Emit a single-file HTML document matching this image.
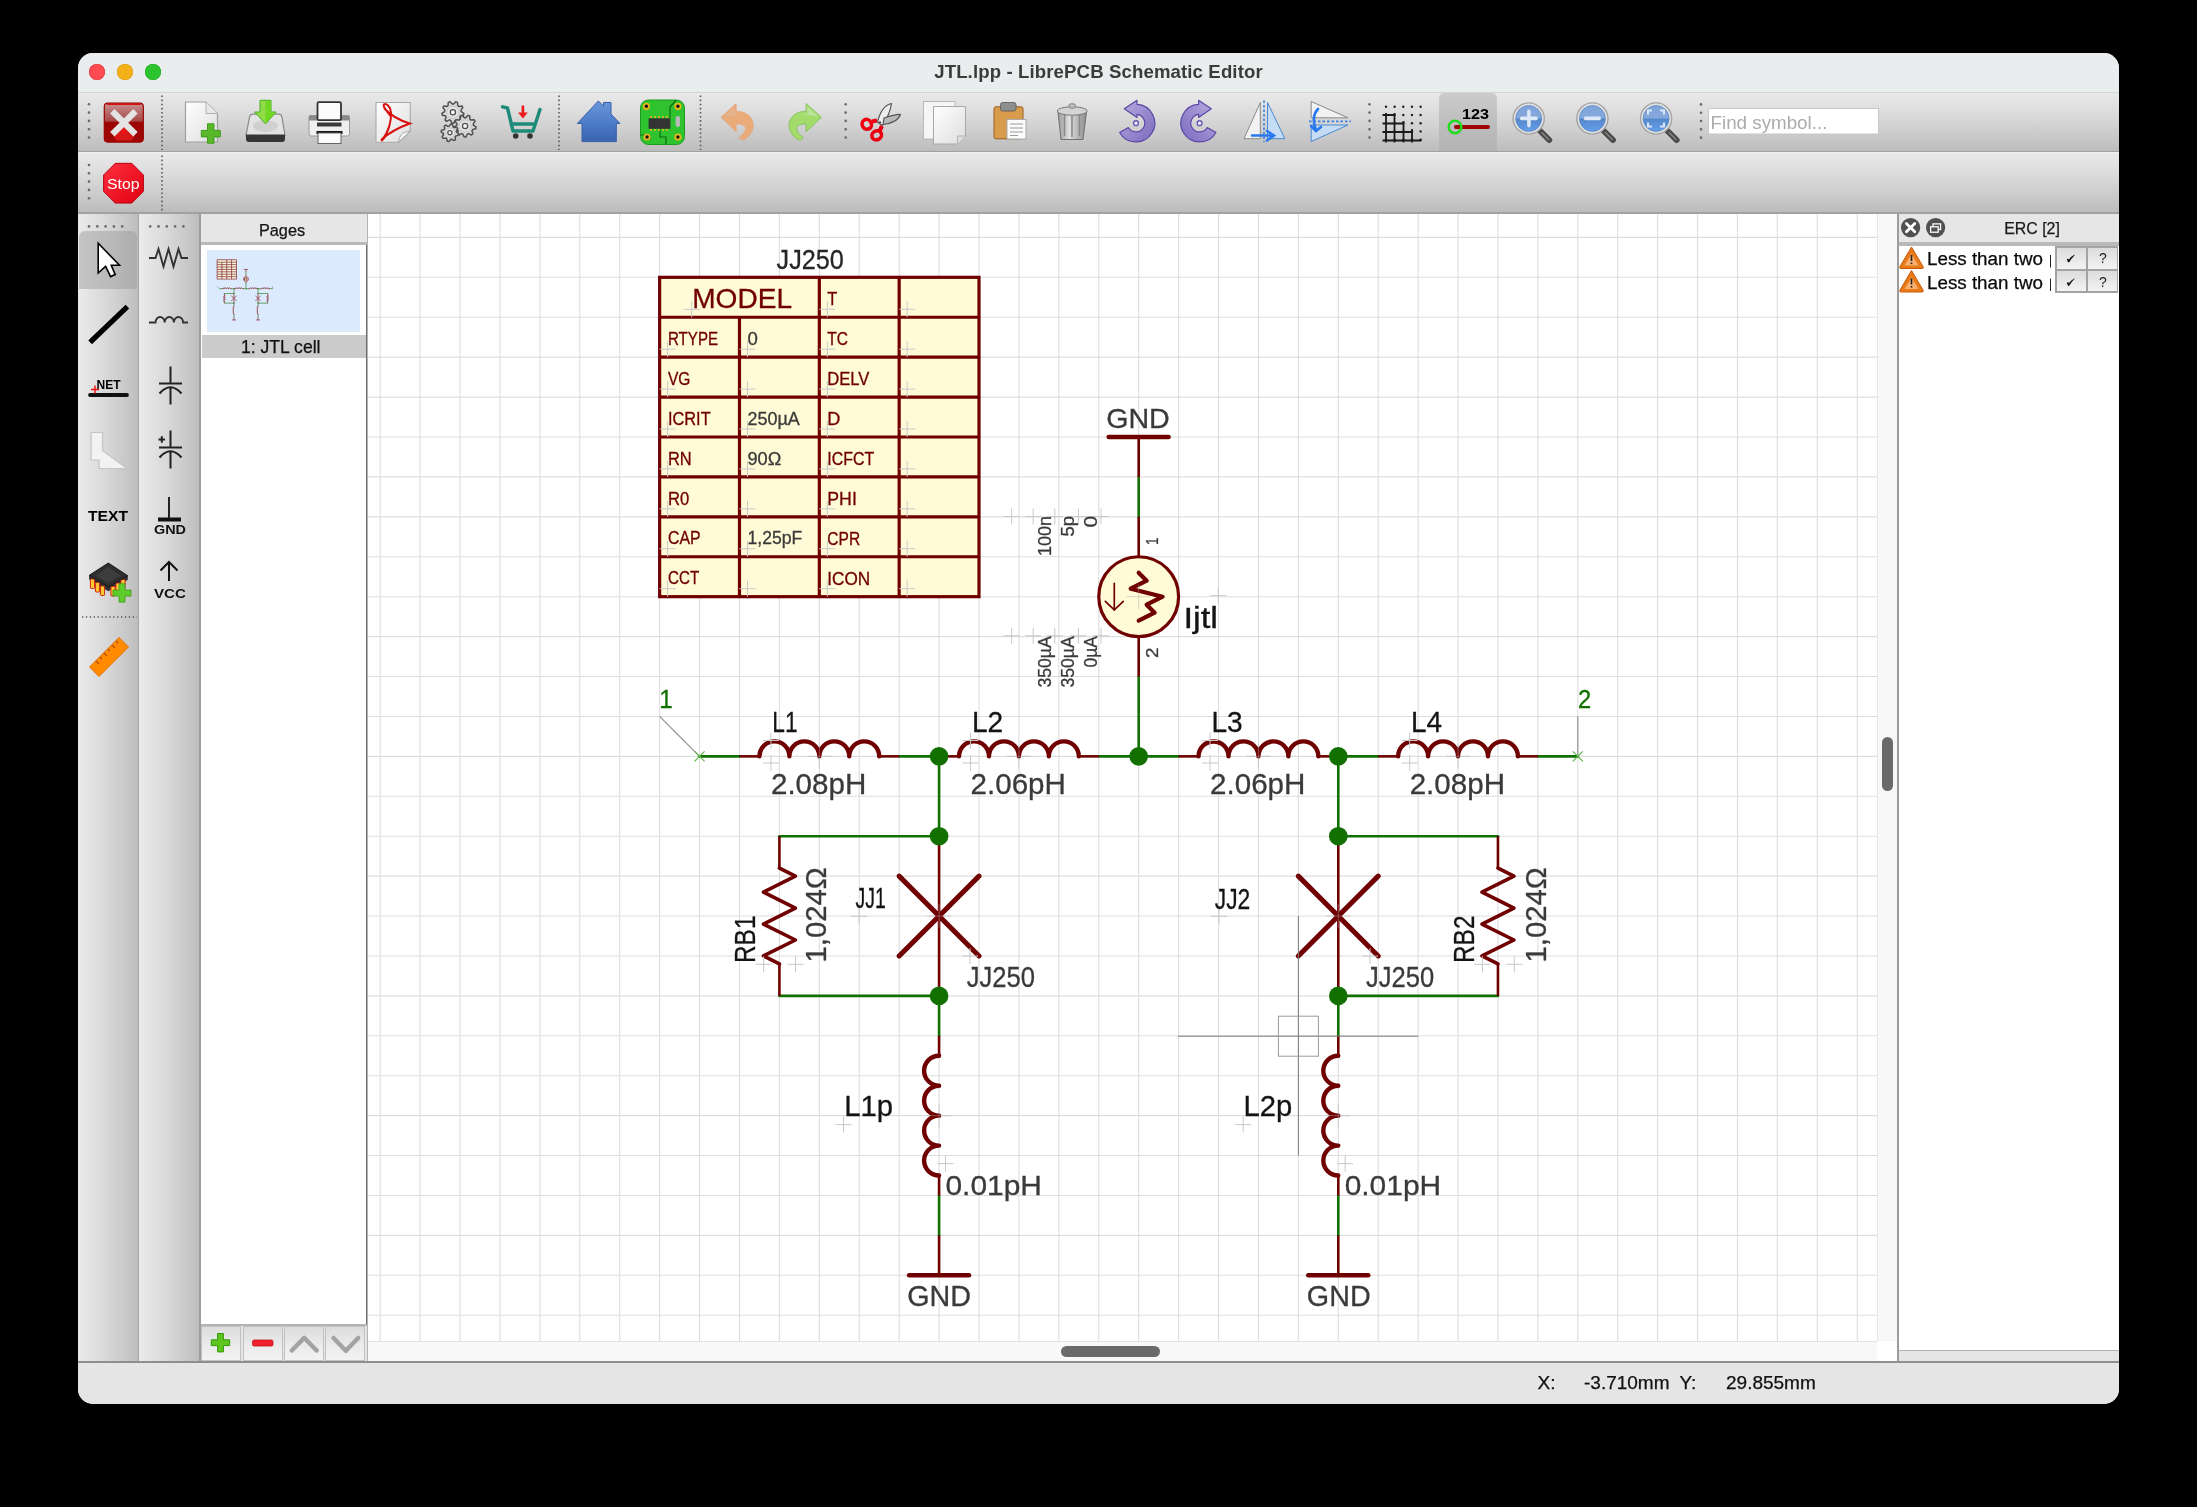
<!DOCTYPE html>
<html><head><meta charset="utf-8"><title>JTL.lpp - LibrePCB Schematic Editor</title>
<style>
html,body{margin:0;padding:0;background:#000;width:2197px;height:1507px;overflow:hidden}
body{position:relative;font-family:"Liberation Sans",sans-serif}
#win{position:absolute;left:78px;top:53px;width:2041px;height:1351px;border-radius:15px;overflow:hidden;background:#e5e5e5}
#pg{position:absolute;left:-78px;top:-53px;width:2197px;height:1507px;will-change:transform}
svg.ov{position:absolute;left:0;top:0;overflow:visible}
.tx{-webkit-text-stroke:0.25px currentColor}
.thumb line,.thumb path,.thumb polyline,.thumb polygon,.thumb rect,.thumb circle{stroke-width:12px}
</style></head><body>
<div id="win"><div id="pg">
<div style="position:absolute;left:78px;top:53px;width:2041px;height:39px;background:#eaedee"></div><div style="position:absolute;left:78px;top:92px;width:2041px;height:1px;background:#d3d4d4"></div><div style="position:absolute;left:89.1px;top:64.1px;width:16.4px;height:16.4px;border-radius:50%;background:#fe4b52;box-shadow:inset 0 0 0 0.6px #e0383f"></div><div style="position:absolute;left:116.9px;top:64.1px;width:16.4px;height:16.4px;border-radius:50%;background:#f5b119;box-shadow:inset 0 0 0 0.6px #dc9a10"></div><div style="position:absolute;left:144.6px;top:64.1px;width:16.4px;height:16.4px;border-radius:50%;background:#2dc52f;box-shadow:inset 0 0 0 0.6px #20a824"></div><div style="position:absolute;left:78px;top:61px;width:2041px;text-align:center;font:bold 18.6px 'Liberation Sans',sans-serif;color:#3b3b3b;letter-spacing:0.12px">JTL.lpp - LibrePCB Schematic Editor</div><div style="position:absolute;left:78px;top:93px;width:2041px;height:58px;background:linear-gradient(#e9e9e9,#dcdcdc 35%,#c9c9c9 75%,#bcbcbc)"></div><div style="position:absolute;left:78px;top:151px;width:2041px;height:1.4px;background:#a2a2a2"></div><div style="position:absolute;left:78px;top:152.4px;width:2041px;height:0.8px;background:#efefef"></div><div style="position:absolute;left:78px;top:153px;width:2041px;height:59px;background:linear-gradient(#e9e9e9,#dcdcdc 35%,#c9c9c9 75%,#bcbcbc)"></div><div style="position:absolute;left:78px;top:212px;width:2041px;height:2px;background:#a0a1a1"></div><div style="position:absolute;left:1438.8px;top:93px;width:58.3px;height:58px;background:linear-gradient(#cbcbcb,#bcbcbc 60%,#b3b3b3);border-radius:5px 5px 0 0"></div><div style="position:absolute;left:1708px;top:108.3px;width:171px;height:27.2px;background:#fff;box-shadow:inset 0 0 0 1px #c9c9c9,inset 0 -1.2px 0 #8e8e8e"></div><div style="position:absolute;left:1710.5px;top:112px;font:18.8px 'Liberation Sans',sans-serif;color:#ababab;white-space:pre">Find symbol...</div><svg style="position:absolute;left:0px;top:0px;overflow:visible" width="2197" height="1507" viewBox="0 0 2197 1507" class="ov"><circle cx="89" cy="104.3" r="1.3" fill="#6a6a6a"/><circle cx="89" cy="112.6" r="1.3" fill="#6a6a6a"/><circle cx="89" cy="120.9" r="1.3" fill="#6a6a6a"/><circle cx="89" cy="129.2" r="1.3" fill="#6a6a6a"/><circle cx="89" cy="137.5" r="1.3" fill="#6a6a6a"/><circle cx="89" cy="165" r="1.3" fill="#6a6a6a"/><circle cx="89" cy="173.3" r="1.3" fill="#6a6a6a"/><circle cx="89" cy="181.6" r="1.3" fill="#6a6a6a"/><circle cx="89" cy="189.9" r="1.3" fill="#6a6a6a"/><circle cx="89" cy="198.2" r="1.3" fill="#6a6a6a"/><line x1="162" y1="95.5" x2="162" y2="150" stroke="#5a5a5a" stroke-width="1.6" stroke-dasharray="1.6 2.5"/><line x1="162" y1="155.5" x2="162" y2="211" stroke="#5a5a5a" stroke-width="1.6" stroke-dasharray="1.6 2.5"/><line x1="559" y1="95.5" x2="559" y2="150" stroke="#5a5a5a" stroke-width="1.6" stroke-dasharray="1.6 2.5"/><line x1="700.5" y1="95.5" x2="700.5" y2="150" stroke="#5a5a5a" stroke-width="1.6" stroke-dasharray="1.6 2.5"/><circle cx="845.7" cy="104.3" r="1.3" fill="#6a6a6a"/><circle cx="845.7" cy="112.6" r="1.3" fill="#6a6a6a"/><circle cx="845.7" cy="120.9" r="1.3" fill="#6a6a6a"/><circle cx="845.7" cy="129.2" r="1.3" fill="#6a6a6a"/><circle cx="845.7" cy="137.5" r="1.3" fill="#6a6a6a"/><circle cx="1369.5" cy="104.3" r="1.3" fill="#6a6a6a"/><circle cx="1369.5" cy="112.6" r="1.3" fill="#6a6a6a"/><circle cx="1369.5" cy="120.9" r="1.3" fill="#6a6a6a"/><circle cx="1369.5" cy="129.2" r="1.3" fill="#6a6a6a"/><circle cx="1369.5" cy="137.5" r="1.3" fill="#6a6a6a"/><circle cx="1701" cy="104.4" r="1.3" fill="#6a6a6a"/><circle cx="1701" cy="112.7" r="1.3" fill="#6a6a6a"/><circle cx="1701" cy="121" r="1.3" fill="#6a6a6a"/><circle cx="1701" cy="129.3" r="1.3" fill="#6a6a6a"/><circle cx="1701" cy="137.6" r="1.3" fill="#6a6a6a"/></svg><svg style="position:absolute;left:0px;top:0px;overflow:visible" width="2197" height="1507" viewBox="0 0 2197 1507" class="ov"><defs><linearGradient id="gclose" x1="0" y1="0" x2="0" y2="1"><stop offset="0" stop-color="#c89090"/><stop offset=".45" stop-color="#a84a4a"/><stop offset=".5" stop-color="#9c0404"/><stop offset="1" stop-color="#a00808"/></linearGradient><linearGradient id="gpaper" x1="0" y1="0" x2="1" y2="1"><stop offset="0" stop-color="#ffffff"/><stop offset="1" stop-color="#dedede"/></linearGradient><linearGradient id="ghouse" x1="0" y1="0" x2="0" y2="1"><stop offset="0" stop-color="#6b98dc"/><stop offset=".6" stop-color="#4a78c4"/><stop offset="1" stop-color="#3a64b0"/></linearGradient><linearGradient id="gpurp" x1="0" y1="0" x2="1" y2="1"><stop offset="0" stop-color="#b8aee0"/><stop offset=".6" stop-color="#9484cc"/><stop offset="1" stop-color="#7a68bc"/></linearGradient><linearGradient id="glens" x1="0" y1="0" x2="0" y2="1"><stop offset="0" stop-color="#7ea4da"/><stop offset=".48" stop-color="#86a9dc"/><stop offset=".52" stop-color="#5688cc"/><stop offset="1" stop-color="#64a0ea"/></linearGradient><linearGradient id="gtrash" x1="0" y1="0" x2="1" y2="0"><stop offset="0" stop-color="#9a9a9a"/><stop offset=".4" stop-color="#e0e0e0"/><stop offset="1" stop-color="#8a8a8a"/></linearGradient><linearGradient id="gstop" x1="0" y1="0" x2="1" y2="1"><stop offset="0" stop-color="#ff3040"/><stop offset="1" stop-color="#e00010"/></linearGradient></defs><rect x="104.3" y="103.1" width="39" height="39" rx="3.5" fill="url(#gclose)" stroke="#9a0000" stroke-width="1.2"/><path d="M107 104.2H141" stroke="#d81010" stroke-width="1.4"/><path d="M123.8 126L134 136.5L131 140.5H116.5L113.5 136.5Z" fill="#d81818"/><rect x="122" y="130" width="3.5" height="3.5" fill="#ff1010"/><path d="M112.3 111.3L135.5 134.2M135.5 111.3L112.3 134.2" stroke="#e4e4e4" stroke-width="6.2"/><path d="M185.5 102H206L217.5 113.5V142H185.5Z" fill="url(#gpaper)" stroke="#a0a0a0" stroke-width="1.2"/><path d="M206 102V113.5H217.5" fill="#e8e8e8" stroke="#b0b0b0" stroke-width="1"/><path d="M207.5 123.8h6.5v6.6h6.3v6.5h-6.3v6.3h-6.5v-6.3h-6.2v-6.5h6.2z" fill="#58b82a" stroke="#3f9a1c" stroke-width="1"/><path d="M252.5 114.2H279C281 114.2 281.5 115.5 282 117L285 135.7H246L249.5 117C250 115.5 250.8 114.2 252.5 114.2Z" fill="#e2e2e2" stroke="#8a8a8a" stroke-width="1.2"/><ellipse cx="265.5" cy="126" rx="12.5" ry="6" fill="#d0d0d0"/><path d="M246 134.5H285V139C285 141 284 142 282 142H249C247 142 246 141 246 139Z" fill="#353535"/><path d="M260 100.3H271V112H276.2L265.5 123.8L254.6 112H260Z" fill="#8fdc48" stroke="#46b020" stroke-width="1"/><path d="M265.5 100.8H270.5V112.5H275L265.5 123Z" fill="#70d820"/><rect x="309" y="115.5" width="40.5" height="20.5" rx="2" fill="#f0f0f0" stroke="#9a9a9a" stroke-width="1"/><rect x="309" y="115.5" width="40.5" height="5" fill="#8a8a8a"/><rect x="317.5" y="102.2" width="23.5" height="18" rx="1.5" fill="#fbfbfb" stroke="#333" stroke-width="1.8"/><rect x="317" y="122.5" width="24.5" height="4" fill="#3a3a3a"/><rect x="316.5" y="131" width="26" height="3" fill="#111"/><rect x="318" y="133" width="23" height="10.5" fill="#fafafa" stroke="#666" stroke-width="1"/><path d="M376 102.5H410.3V131L398.5 142.3H376Z" fill="url(#gpaper)" stroke="#a8a8a8" stroke-width="1.1"/><path d="M398.5 142.3C399.5 137 401 134 403 133C405 132 408 131.5 410.3 131Z" fill="#f4f4f4" stroke="#9a9a9a" stroke-width="0.8"/><path d="M390.5 116C386 110 382.5 106 384 104.3C386 103 390.5 106 391 112.5C391.5 120 389 132 381.8 140.5M384.5 108.5C391 116 400 120.5 409.8 123.5C400 127 390 132 381.5 139.5M381.8 140.5L385 137" fill="none" stroke="#d81010" stroke-width="2" stroke-linecap="round"/><path d="M463.86 113.26 L463.53 115.15 L460.48 115.83 L459.75 117.1 L460.68 120.08 L459.21 121.31 L456.43 119.88 L455.06 120.38 L453.86 123.26 L451.94 123.26 L450.74 120.38 L449.37 119.88 L446.59 121.31 L445.12 120.08 L446.05 117.1 L445.32 115.83 L442.27 115.15 L441.94 113.26 L444.57 111.57 L444.82 110.14 L442.93 107.65 L443.89 105.99 L446.99 106.39 L448.1 105.45 L448.25 102.33 L450.05 101.67 L452.17 103.97 L453.63 103.97 L455.75 101.67 L457.55 102.33 L457.7 105.45 L458.81 106.39 L461.91 105.99 L462.87 107.65 L460.98 110.14 L461.23 111.57Z" fill="#d9d9d9" stroke="#505050" stroke-width="1.5" stroke-linejoin="round"/><circle cx="452.9" cy="112.3" r="6.05" fill="#e4e4e4" stroke="#bdbdbd" stroke-width="0.8"/><circle cx="452.9" cy="112.3" r="2.64" fill="#f4f4f4" stroke="#505050" stroke-width="1.3"/><path d="M476.06 126.96 L475.73 128.85 L472.68 129.53 L471.95 130.8 L472.88 133.78 L471.41 135.01 L468.63 133.58 L467.26 134.08 L466.06 136.96 L464.14 136.96 L462.94 134.08 L461.57 133.58 L458.79 135.01 L457.32 133.78 L458.25 130.8 L457.52 129.53 L454.47 128.85 L454.14 126.96 L456.77 125.27 L457.02 123.84 L455.13 121.35 L456.09 119.69 L459.19 120.09 L460.3 119.15 L460.45 116.03 L462.25 115.37 L464.37 117.67 L465.83 117.67 L467.95 115.37 L469.75 116.03 L469.9 119.15 L471.01 120.09 L474.11 119.69 L475.07 121.35 L473.18 123.84 L473.43 125.27Z" fill="#d9d9d9" stroke="#505050" stroke-width="1.5" stroke-linejoin="round"/><circle cx="465.1" cy="126" r="6.05" fill="#e4e4e4" stroke="#bdbdbd" stroke-width="0.8"/><circle cx="465.1" cy="126" r="2.64" fill="#f4f4f4" stroke="#505050" stroke-width="1.3"/><path d="M458.66 133.66 L458.32 135.35 L455.8 135.95 L455.07 137.04 L455.48 139.6 L454.05 140.56 L451.84 139.2 L450.56 139.46 L449.04 141.56 L447.35 141.22 L446.75 138.7 L445.66 137.97 L443.1 138.38 L442.14 136.95 L443.5 134.74 L443.24 133.46 L441.14 131.94 L441.48 130.25 L444 129.65 L444.73 128.56 L444.32 126 L445.75 125.04 L447.96 126.4 L449.24 126.14 L450.76 124.04 L452.45 124.38 L453.05 126.9 L454.14 127.63 L456.7 127.22 L457.66 128.65 L456.3 130.86 L456.56 132.14Z" fill="#d9d9d9" stroke="#505050" stroke-width="1.5" stroke-linejoin="round"/><circle cx="449.9" cy="132.8" r="4.84" fill="#e4e4e4" stroke="#bdbdbd" stroke-width="0.8"/><circle cx="449.9" cy="132.8" r="2.11" fill="#f4f4f4" stroke="#505050" stroke-width="1.3"/><path d="M502.5 106.8L507.5 108L513 131H533M511 124H533M540 109.5L533 131" fill="none" stroke="#1e8a7a" stroke-width="3.4" stroke-linejoin="round" stroke-linecap="round"/><circle cx="515.7" cy="136" r="2.8" fill="#333"/><circle cx="530" cy="136" r="2.8" fill="#333"/><path d="M521.6 105.5H524.2V112.5H527.8L522.9 118.5L518 112.5H521.6Z" fill="#f01818"/><path d="M598.3 101L577.3 123.5H582V141.6H616.3V123.5H620L611 114V102.5H603.5V106Z" fill="url(#ghouse)" stroke="#3a5ea8" stroke-width="1"/><rect x="640.5" y="100" width="44" height="44.5" rx="8" fill="#2fc42f" stroke="#1d9a1d" stroke-width="1"/><path d="M640.5 135H650V140M676 100.5L670 107V118M660 129V137H666V144" fill="none" stroke="#0f6a0f" stroke-width="1.2"/><circle cx="646.4" cy="106.3" r="3.6" fill="#e8b820"/><circle cx="646.4" cy="106.3" r="1.7" fill="#111"/><circle cx="677.9" cy="106.3" r="3.6" fill="#e8b820"/><circle cx="677.9" cy="106.3" r="1.7" fill="#111"/><circle cx="647.1" cy="137" r="3.6" fill="#e8b820"/><circle cx="647.1" cy="137" r="1.7" fill="#111"/><circle cx="677.9" cy="137" r="3.6" fill="#e8b820"/><circle cx="677.9" cy="137" r="1.7" fill="#111"/><rect x="648.6" y="118.3" width="21.8" height="10.5" fill="#333"/><path d="M651 116v2M655 116v2M659 116v2M663 116v2M667 116v2M651 129v2M655 129v2M659 129v2M663 129v2M667 129v2" stroke="#e8b820" stroke-width="1.6"/><rect x="675.6" y="116" width="4.4" height="11" rx="2" fill="#b8b8b8"/><path d="M720.9 117.3L736.2 103.5V111.2C746 111.2 753.3 117 753.3 125.5C753.3 131 749.5 136 745 139.3Q741.5 141.5 739.2 137.6C742 135 745.5 132 745.5 128.5C745.5 125.5 742 123.9 736.2 123.9V131.8Z" fill="#eaab7a" stroke="#e4a070" stroke-width="0.6" stroke-linejoin="round"/><path d="M724 116.5L735 106.5V114H744Z" fill="#e2b898" opacity="0.7"/><path transform="translate(1542.3 0) scale(-1 1)" d="M720.9 117.3L736.2 103.5V111.2C746 111.2 753.3 117 753.3 125.5C753.3 131 749.5 136 745 139.3Q741.5 141.5 739.2 137.6C742 135 745.5 132 745.5 128.5C745.5 125.5 742 123.9 736.2 123.9V131.8Z" fill="#a4dc6c" stroke="#88c464" stroke-width="1" stroke-linejoin="round"/><path transform="translate(1542.3 0) scale(-1 1)" d="M724 116.5L735 106.5V114H744Z" fill="#c0e4a8" opacity="0.8"/><path d="M877.5 122C880 112 885 105 891.5 103.5C890.5 110 887.5 118 882.5 125.5Z" fill="#eeeeee" stroke="#555" stroke-width="1.2" stroke-linejoin="round"/><path d="M884 118C890 116 896 114 900.5 114.5C898.5 120 891 124 883 124.5Z" fill="#b8b8b8" stroke="#555" stroke-width="1.2" stroke-linejoin="round"/><circle cx="880" cy="122.3" r="1" fill="#333"/><path d="M877 120.5L872 121.5" stroke="#ee0010" stroke-width="4"/><path d="M882 126L879.5 131" stroke="#ee0010" stroke-width="4"/><ellipse cx="866.8" cy="124.3" rx="4.6" ry="5" fill="none" stroke="#ee0010" stroke-width="3.6" transform="rotate(-30 866.8 124.3)"/><ellipse cx="876.7" cy="135.3" rx="5" ry="4.4" fill="none" stroke="#ee0010" stroke-width="3.6" transform="rotate(-30 876.7 135.3)"/><rect x="923.5" y="101.5" width="31.5" height="37.5" fill="#f6f6f6" stroke="#b8b8b8" stroke-width="1"/><path d="M933.5 106.5H965.5V136L957.5 144H933.5Z" fill="url(#gpaper)" stroke="#a8a8a8" stroke-width="1"/><path d="M957.5 144V136H965.5" fill="#ddd" stroke="#aaa" stroke-width="0.8"/><rect x="994" y="106.8" width="29" height="32" rx="2" fill="#d89c4c" stroke="#9c5c1c" stroke-width="1"/><rect x="1000.5" y="102.5" width="15.5" height="8.5" rx="2" fill="#8e8e8e" stroke="#555" stroke-width="0.8"/><rect x="1007" y="119.5" width="19" height="19.5" fill="#fbfbfb" stroke="#aaa" stroke-width="1"/><path d="M1010 124H1023M1010 128H1023M1010 132H1023M1010 135.5H1018" stroke="#9a9a9a" stroke-width="1.2"/><path d="M1058 112L1061 139.5H1083L1086.5 112Z" fill="url(#gtrash)" stroke="#707070" stroke-width="1"/><path d="M1064.5 115V136M1072 115V137M1079.5 115V136" stroke="#8a8a8a" stroke-width="1.6"/><ellipse cx="1072.2" cy="111" rx="15" ry="4.2" fill="#d4d4d4" stroke="#7a7a7a" stroke-width="1"/><ellipse cx="1072.2" cy="106" rx="3.5" ry="2.4" fill="#bbb" stroke="#7a7a7a" stroke-width="0.8"/><path d="M1124.3 108.8L1137 100.3V104.4 A18.8 18.8 0 1 1 1119.65 132.49 L1128.35 127.55 A8.8 8.8 0 1 0 1137 114.4 V117.5Z" fill="url(#gpurp)" stroke="#5a48a8" stroke-width="1.2" stroke-linejoin="round"/><circle cx="1136" cy="123.2" r="2.4" fill="#e8f0ff" stroke="#6a58b8" stroke-width="1.4"/><g transform="translate(2335.6 0) scale(-1 1)"><path d="M1124.3 108.8L1137 100.3V104.4 A18.8 18.8 0 1 1 1119.65 132.49 L1128.35 127.55 A8.8 8.8 0 1 0 1137 114.4 V117.5Z" fill="url(#gpurp)" stroke="#5a48a8" stroke-width="1.2" stroke-linejoin="round"/><circle cx="1136" cy="123.2" r="2.4" fill="#e8f0ff" stroke="#6a58b8" stroke-width="1.4"/></g><path d="M1244 138.7L1260.3 102.5V138.7Z" fill="#f2f2f2" stroke="#8a8a8a" stroke-width="1"/><path d="M1267.5 102.5L1284.8 138.7H1267.5Z" fill="#c6dcf4" stroke="#4a88d0" stroke-width="1"/><line x1="1264" y1="100.5" x2="1264" y2="142" stroke="#3a80e0" stroke-width="1.6" stroke-dasharray="2.5 2"/><path d="M1252 135.5H1272M1267 131L1274 135.5L1267 140.5" fill="none" stroke="#2a78f0" stroke-width="2.6" stroke-linecap="round"/><path d="M1311.2 101.5L1348 117.8H1311.2Z" fill="#f2f2f2" stroke="#8a8a8a" stroke-width="1"/><path d="M1311.2 125L1348 125L1311.2 141.5Z" fill="#c6dcf4" stroke="#4a88d0" stroke-width="1"/><line x1="1309" y1="121.4" x2="1351" y2="121.4" stroke="#3a80e0" stroke-width="1.6" stroke-dasharray="2.5 2"/><path d="M1318 109C1313 114 1313 122 1316 130M1311 126L1316 131L1321 127" fill="none" stroke="#2a78f0" stroke-width="2.6" stroke-linecap="round"/><circle cx="1386" cy="106.8" r="1.2" fill="#222"/><circle cx="1386" cy="115" r="1.2" fill="#222"/><circle cx="1386" cy="123.2" r="1.2" fill="#222"/><circle cx="1386" cy="131.4" r="1.2" fill="#222"/><circle cx="1386" cy="139.6" r="1.2" fill="#222"/><circle cx="1394.65" cy="106.8" r="1.2" fill="#222"/><circle cx="1394.65" cy="115" r="1.2" fill="#222"/><circle cx="1394.65" cy="123.2" r="1.2" fill="#222"/><circle cx="1394.65" cy="131.4" r="1.2" fill="#222"/><circle cx="1394.65" cy="139.6" r="1.2" fill="#222"/><circle cx="1403.3" cy="106.8" r="1.2" fill="#222"/><circle cx="1403.3" cy="115" r="1.2" fill="#222"/><circle cx="1403.3" cy="123.2" r="1.2" fill="#222"/><circle cx="1403.3" cy="131.4" r="1.2" fill="#222"/><circle cx="1403.3" cy="139.6" r="1.2" fill="#222"/><circle cx="1411.95" cy="106.8" r="1.2" fill="#222"/><circle cx="1411.95" cy="115" r="1.2" fill="#222"/><circle cx="1411.95" cy="123.2" r="1.2" fill="#222"/><circle cx="1411.95" cy="131.4" r="1.2" fill="#222"/><circle cx="1411.95" cy="139.6" r="1.2" fill="#222"/><circle cx="1420.6" cy="106.8" r="1.2" fill="#222"/><circle cx="1420.6" cy="115" r="1.2" fill="#222"/><circle cx="1420.6" cy="123.2" r="1.2" fill="#222"/><circle cx="1420.6" cy="131.4" r="1.2" fill="#222"/><circle cx="1420.6" cy="139.6" r="1.2" fill="#222"/><path d="M1382.5 115H1395M1382.5 123.5H1404M1382.5 132H1412.5M1382.5 140.5H1421.5M1386 113V142.5M1394.5 113V142.5M1403.5 121V142.5M1412 129V142.5" stroke="#1a1a1a" stroke-width="1.8"/><text x="1462" y="118.8" font-size="14" font-weight="bold" fill="#000" font-family="'Liberation Sans',sans-serif" textLength="27" lengthAdjust="spacingAndGlyphs">123</text><line x1="1456" y1="127" x2="1488" y2="127" stroke="#a00000" stroke-width="4" stroke-linecap="round"/><circle cx="1455" cy="127" r="6.3" fill="none" stroke="#22dd22" stroke-width="2.6"/><line x1="1540.2" y1="131" x2="1549.2" y2="140" stroke="#4a4a4a" stroke-width="6" stroke-linecap="round"/><line x1="1541.7" y1="132.5" x2="1548.7" y2="139.5" stroke="#8a8a8a" stroke-width="1.2" stroke-linecap="round"/><circle cx="1528.7" cy="118.5" r="15.6" fill="#e2e2e2" stroke="#a4a4a4" stroke-width="1.4"/><circle cx="1528.7" cy="118.5" r="13" fill="url(#glens)" stroke="#4a78c0" stroke-width="0.6"/><line x1="1603.9" y1="131" x2="1612.9" y2="140" stroke="#4a4a4a" stroke-width="6" stroke-linecap="round"/><line x1="1605.4" y1="132.5" x2="1612.4" y2="139.5" stroke="#8a8a8a" stroke-width="1.2" stroke-linecap="round"/><circle cx="1592.4" cy="118.5" r="15.6" fill="#e2e2e2" stroke="#a4a4a4" stroke-width="1.4"/><circle cx="1592.4" cy="118.5" r="13" fill="url(#glens)" stroke="#4a78c0" stroke-width="0.6"/><line x1="1667.6" y1="131" x2="1676.6" y2="140" stroke="#4a4a4a" stroke-width="6" stroke-linecap="round"/><line x1="1669.1" y1="132.5" x2="1676.1" y2="139.5" stroke="#8a8a8a" stroke-width="1.2" stroke-linecap="round"/><circle cx="1656.1" cy="118.5" r="15.6" fill="#e2e2e2" stroke="#a4a4a4" stroke-width="1.4"/><circle cx="1656.1" cy="118.5" r="13" fill="url(#glens)" stroke="#4a78c0" stroke-width="0.6"/><path d="M1528.9 111.2V125.6M1521.7 118.4H1536.1" stroke="#dde8f8" stroke-width="3.6" stroke-linecap="round"/><path d="M1585.6 118.4H1599.2" stroke="#dde8f8" stroke-width="3.6" stroke-linecap="round"/><path d="M1648 114.5v-4h4M1660 110.5h4v4M1664 122.5v4h-4M1652 126.5h-4v-4" fill="none" stroke="#dde8f8" stroke-width="2"/><polygon points="143.36,191.43 131.73,203.06 115.27,203.06 103.64,191.43 103.64,174.97 115.27,163.34 131.73,163.34 143.36,174.97" fill="url(#gstop)" stroke="#b80010" stroke-width="1"/><text x="107" y="188.5" font-size="15.4" fill="#fff" font-family="'Liberation Sans',sans-serif" textLength="32.5" lengthAdjust="spacingAndGlyphs">Stop</text></svg><div style="position:absolute;left:78px;top:214px;width:59.5px;height:1147px;background:linear-gradient(90deg,#ebebeb,#d9d9d9 45%,#c6c6c6 85%,#bdbdbd)"></div><div style="position:absolute;left:137.5px;top:214px;width:1.5px;height:1147px;background:#a6a6a6"></div><div style="position:absolute;left:139px;top:214px;width:60px;height:1147px;background:linear-gradient(90deg,#ebebeb,#d9d9d9 45%,#c6c6c6 85%,#bdbdbd)"></div><div style="position:absolute;left:199px;top:214px;width:1.5px;height:1147px;background:#9e9e9e"></div><div style="position:absolute;left:79px;top:231px;width:58px;height:58px;background:linear-gradient(90deg,#c4c4c4,#b8b8b8 60%,#adadad);border-radius:6px 6px 0 0"></div><svg style="position:absolute;left:0px;top:0px;overflow:visible" width="2197" height="1507" viewBox="0 0 2197 1507" class="ov"><path d="M98.2 243.2V273L105.6 266.3L110.6 276.6L115.2 274.6L111.3 265.3H119.5Z" fill="#fff" stroke="#000" stroke-width="1.6" stroke-linejoin="miter"/><line x1="92" y1="340.5" x2="125.5" y2="308.5" stroke="#000" stroke-width="5.2" stroke-linecap="square"/><text x="96.5" y="388.5" font-size="13.5" font-weight="bold" fill="#000" font-family="'Liberation Sans',sans-serif" textLength="24" lengthAdjust="spacingAndGlyphs">NET</text><line x1="90" y1="395" x2="127" y2="395" stroke="#111" stroke-width="3.8" stroke-linecap="round"/><path d="M91 389.5H99M95 385.5V393.5" stroke="#e81010" stroke-width="1.4"/><path d="M91 432.5H102.5V450.5L127 468.5H99V460H91Z" fill="#f2f2f2" stroke="#c4c4c4" stroke-width="1.2"/><text x="88" y="520.5" font-size="15.4" font-weight="bold" fill="#000" font-family="'Liberation Sans',sans-serif" textLength="40" lengthAdjust="spacingAndGlyphs">TEXT</text><path d="M89.1 575.4V579.5L108.3 591.3L127.8 579.8V575.8Z" fill="#303030"/><rect x="90.4" y="579" width="4.2" height="9.5" rx="1" fill="#ffc830" stroke="#c82010" stroke-width="1"/><rect x="95.4" y="582.5" width="4.2" height="9.5" rx="1" fill="#ffc830" stroke="#c82010" stroke-width="1"/><rect x="100.4" y="586" width="4.2" height="9.5" rx="1" fill="#ffc830" stroke="#c82010" stroke-width="1"/><rect x="110.9" y="586.5" width="4.2" height="9.5" rx="1" fill="#ffc830" stroke="#c82010" stroke-width="1"/><rect x="115.9" y="583" width="4.2" height="9.5" rx="1" fill="#ffc830" stroke="#c82010" stroke-width="1"/><rect x="120.9" y="579.5" width="4.2" height="9.5" rx="1" fill="#ffc830" stroke="#c82010" stroke-width="1"/><path d="M108.3 563L127.8 575.8L108.3 587L89.1 575.4Z" fill="#2e2e2e" stroke="#1a1a1a" stroke-width="1"/><path d="M108.3 567L121 575.6L108.3 583L95.5 575.4Z" fill="#3c3c3c"/><path d="M119 583.8h6v6.3h6v6h-6v6h-6v-6h-6v-6h6z" fill="#5ecc2a" stroke="#3a9a1a" stroke-width="0.8"/><line x1="82" y1="617" x2="137" y2="617" stroke="#555" stroke-width="1.3" stroke-dasharray="1.3 2.6"/><path d="M89.5 667L119 637.5L128.5 647L99 676.5Z" fill="#ff8a00" stroke="#e07000" stroke-width="1"/><path d="M96 661l3 3M100 657l2 2M104 653l3 3M108 649l2 2M112 645l3 3M116 641l2 2" stroke="#b05000" stroke-width="1.2"/><circle cx="89" cy="226.4" r="1.3" fill="#6a6a6a"/><circle cx="97.3" cy="226.4" r="1.3" fill="#6a6a6a"/><circle cx="105.6" cy="226.4" r="1.3" fill="#6a6a6a"/><circle cx="113.9" cy="226.4" r="1.3" fill="#6a6a6a"/><circle cx="122.2" cy="226.4" r="1.3" fill="#6a6a6a"/><circle cx="150.2" cy="226.4" r="1.3" fill="#6a6a6a"/><circle cx="158.5" cy="226.4" r="1.3" fill="#6a6a6a"/><circle cx="166.8" cy="226.4" r="1.3" fill="#6a6a6a"/><circle cx="175.1" cy="226.4" r="1.3" fill="#6a6a6a"/><circle cx="183.4" cy="226.4" r="1.3" fill="#6a6a6a"/><polyline points="149,258 155.5,258 158.5,249 163.5,266.5 168.5,249 173.5,266.5 178.5,249 181.5,258 188,258" fill="none" stroke="#333" stroke-width="1.9" stroke-linejoin="miter"/><path d="M149 322.5H155.5A4.6 5.5 0 0 1 164.7 322.5A4.6 5.5 0 0 1 173.9 322.5A4.6 5.5 0 0 1 183.1 322.5H188" fill="none" stroke="#333" stroke-width="1.9"/><path d="M170.5 366.5V383.5M159 383.5H182M170.5 387V404.5M159.5 393.5Q170.5 381 181.5 393.5" fill="none" stroke="#222" stroke-width="2"/><path d="M170.5 430.5V447.5M159 447.5H182M170.5 451V468.5M159.5 457.5Q170.5 445 181.5 457.5M158.5 439.5H165M161.8 436.2V442.8" fill="none" stroke="#222" stroke-width="2"/><path d="M169 497V518" stroke="#222" stroke-width="2"/><rect x="158" y="517.5" width="23" height="4" fill="#111"/><text x="154" y="534" font-size="13.5" font-weight="bold" fill="#111" font-family="'Liberation Sans',sans-serif" textLength="32" lengthAdjust="spacingAndGlyphs">GND</text><path d="M169 562V581M160.5 570.5L169 562L177.5 570.5" fill="none" stroke="#111" stroke-width="2"/><text x="154" y="597.5" font-size="13.5" font-weight="bold" fill="#111" font-family="'Liberation Sans',sans-serif" textLength="32" lengthAdjust="spacingAndGlyphs">VCC</text></svg><div style="position:absolute;left:200.5px;top:214px;width:166px;height:28px;background:#e6e6e6"></div><div class="tx" style="position:absolute;left:199px;top:221px;width:166px;text-align:center;font:16.3px 'Liberation Sans',sans-serif;color:#161616">Pages</div><div style="position:absolute;left:200.5px;top:242px;width:166px;height:3.4px;background:#b9b9b9"></div><div style="position:absolute;left:200.5px;top:245.4px;width:165.5px;height:1079px;background:#fff"></div><div style="position:absolute;left:365.5px;top:245.4px;width:1.6px;height:1080px;background:#6f6f6f"></div><div style="position:absolute;left:207.2px;top:250px;width:152.6px;height:81.6px;background:#dceafd"></div><div style="position:absolute;left:202px;top:335.3px;width:163.5px;height:22.3px;background:#cbcbcb"></div><div class="tx" style="position:absolute;left:199px;top:336.5px;width:163.5px;text-align:center;font:17.6px 'Liberation Sans',sans-serif;color:#111">1: JTL cell</div><svg class="ov thumb" style="position:absolute;left:0;top:0" width="2197" height="1507" viewBox="0 0 2197 1507"><g transform="translate(177.33 243.08) scale(0.0603)" opacity="0.8"><line x1="699.56" y1="756.36" x2="739.48" y2="756.36" stroke="#117000" stroke-width="2.6" stroke-linecap="round"/><line x1="899.16" y1="756.36" x2="939.08" y2="756.36" stroke="#117000" stroke-width="2.6" stroke-linecap="round"/><line x1="1098.76" y1="756.36" x2="1178.6" y2="756.36" stroke="#117000" stroke-width="2.6" stroke-linecap="round"/><line x1="1338.28" y1="756.36" x2="1378.2" y2="756.36" stroke="#117000" stroke-width="2.6" stroke-linecap="round"/><line x1="1537.88" y1="756.36" x2="1577.8" y2="756.36" stroke="#117000" stroke-width="2.6" stroke-linecap="round"/><line x1="1138.68" y1="476.92" x2="1138.68" y2="516.84" stroke="#117000" stroke-width="2.6" stroke-linecap="round"/><line x1="1138.68" y1="676.52" x2="1138.68" y2="756.36" stroke="#117000" stroke-width="2.6" stroke-linecap="round"/><line x1="939.08" y1="756.36" x2="939.08" y2="836.2" stroke="#117000" stroke-width="2.6" stroke-linecap="round"/><line x1="1338.28" y1="756.36" x2="1338.28" y2="836.2" stroke="#117000" stroke-width="2.6" stroke-linecap="round"/><line x1="779.4" y1="836.2" x2="939.08" y2="836.2" stroke="#117000" stroke-width="2.6" stroke-linecap="round"/><line x1="779.4" y1="995.88" x2="939.08" y2="995.88" stroke="#117000" stroke-width="2.6" stroke-linecap="round"/><line x1="1338.28" y1="836.2" x2="1497.96" y2="836.2" stroke="#117000" stroke-width="2.6" stroke-linecap="round"/><line x1="1338.28" y1="995.88" x2="1497.96" y2="995.88" stroke="#117000" stroke-width="2.6" stroke-linecap="round"/><line x1="939.08" y1="995.88" x2="939.08" y2="1035.8" stroke="#117000" stroke-width="2.6" stroke-linecap="round"/><line x1="1338.28" y1="995.88" x2="1338.28" y2="1035.8" stroke="#117000" stroke-width="2.6" stroke-linecap="round"/><line x1="939.08" y1="1195.48" x2="939.08" y2="1235.4" stroke="#117000" stroke-width="2.6" stroke-linecap="round"/><line x1="1338.28" y1="1195.48" x2="1338.28" y2="1235.4" stroke="#117000" stroke-width="2.6" stroke-linecap="round"/><line x1="739.48" y1="756.36" x2="759.44" y2="756.36" stroke="#700000" stroke-width="2.6" stroke-linecap="butt"/><line x1="879.2" y1="756.36" x2="899.16" y2="756.36" stroke="#700000" stroke-width="2.6" stroke-linecap="butt"/><path d="M759.44 756.36 A14.97 14.97 0 0 1 789.38 756.36 A14.97 14.97 0 0 1 819.32 756.36 A14.97 14.97 0 0 1 849.26 756.36 A14.97 14.97 0 0 1 879.2 756.36" stroke="#700000" stroke-width="4.4" fill="none" stroke-linecap="round" stroke-linejoin="round"/><line x1="939.08" y1="756.36" x2="959.04" y2="756.36" stroke="#700000" stroke-width="2.6" stroke-linecap="butt"/><line x1="1078.8" y1="756.36" x2="1098.76" y2="756.36" stroke="#700000" stroke-width="2.6" stroke-linecap="butt"/><path d="M959.04 756.36 A14.97 14.97 0 0 1 988.98 756.36 A14.97 14.97 0 0 1 1018.92 756.36 A14.97 14.97 0 0 1 1048.86 756.36 A14.97 14.97 0 0 1 1078.8 756.36" stroke="#700000" stroke-width="4.4" fill="none" stroke-linecap="round" stroke-linejoin="round"/><line x1="1178.6" y1="756.36" x2="1198.56" y2="756.36" stroke="#700000" stroke-width="2.6" stroke-linecap="butt"/><line x1="1318.32" y1="756.36" x2="1338.28" y2="756.36" stroke="#700000" stroke-width="2.6" stroke-linecap="butt"/><path d="M1198.56 756.36 A14.97 14.97 0 0 1 1228.5 756.36 A14.97 14.97 0 0 1 1258.44 756.36 A14.97 14.97 0 0 1 1288.38 756.36 A14.97 14.97 0 0 1 1318.32 756.36" stroke="#700000" stroke-width="4.4" fill="none" stroke-linecap="round" stroke-linejoin="round"/><line x1="1378.2" y1="756.36" x2="1398.16" y2="756.36" stroke="#700000" stroke-width="2.6" stroke-linecap="butt"/><line x1="1517.92" y1="756.36" x2="1537.88" y2="756.36" stroke="#700000" stroke-width="2.6" stroke-linecap="butt"/><path d="M1398.16 756.36 A14.97 14.97 0 0 1 1428.1 756.36 A14.97 14.97 0 0 1 1458.04 756.36 A14.97 14.97 0 0 1 1487.98 756.36 A14.97 14.97 0 0 1 1517.92 756.36" stroke="#700000" stroke-width="4.4" fill="none" stroke-linecap="round" stroke-linejoin="round"/><line x1="939.08" y1="1035.8" x2="939.08" y2="1055.76" stroke="#700000" stroke-width="2.6" stroke-linecap="butt"/><line x1="939.08" y1="1175.52" x2="939.08" y2="1195.48" stroke="#700000" stroke-width="2.6" stroke-linecap="butt"/><path d="M939.08 1055.76 A14.97 14.97 0 0 0 939.08 1085.7 A14.97 14.97 0 0 0 939.08 1115.64 A14.97 14.97 0 0 0 939.08 1145.58 A14.97 14.97 0 0 0 939.08 1175.52" stroke="#700000" stroke-width="4.4" fill="none" stroke-linecap="round" stroke-linejoin="round"/><line x1="939.08" y1="1235.4" x2="939.08" y2="1275.32" stroke="#700000" stroke-width="2.6" stroke-linecap="butt"/><line x1="909.14" y1="1275.32" x2="969.02" y2="1275.32" stroke="#700000" stroke-width="4.6" stroke-linecap="round"/><line x1="1338.28" y1="1035.8" x2="1338.28" y2="1055.76" stroke="#700000" stroke-width="2.6" stroke-linecap="butt"/><line x1="1338.28" y1="1175.52" x2="1338.28" y2="1195.48" stroke="#700000" stroke-width="2.6" stroke-linecap="butt"/><path d="M1338.28 1055.76 A14.97 14.97 0 0 0 1338.28 1085.7 A14.97 14.97 0 0 0 1338.28 1115.64 A14.97 14.97 0 0 0 1338.28 1145.58 A14.97 14.97 0 0 0 1338.28 1175.52" stroke="#700000" stroke-width="4.4" fill="none" stroke-linecap="round" stroke-linejoin="round"/><line x1="1338.28" y1="1235.4" x2="1338.28" y2="1275.32" stroke="#700000" stroke-width="2.6" stroke-linecap="butt"/><line x1="1308.34" y1="1275.32" x2="1368.22" y2="1275.32" stroke="#700000" stroke-width="4.6" stroke-linecap="round"/><line x1="779.4" y1="836.2" x2="779.4" y2="868.14" stroke="#700000" stroke-width="2.6" stroke-linecap="butt"/><line x1="779.4" y1="963.94" x2="779.4" y2="995.88" stroke="#700000" stroke-width="2.6" stroke-linecap="butt"/><polyline points="779.4,868.14 795.37,876.12 763.43,892.09 795.37,908.06 763.43,924.02 795.37,939.99 763.43,955.96 779.4,963.94" stroke="#700000" stroke-width="3.6" fill="none" stroke-linecap="round" stroke-linejoin="round"/><line x1="1497.96" y1="836.2" x2="1497.96" y2="868.14" stroke="#700000" stroke-width="2.6" stroke-linecap="butt"/><line x1="1497.96" y1="963.94" x2="1497.96" y2="995.88" stroke="#700000" stroke-width="2.6" stroke-linecap="butt"/><polyline points="1497.96,868.14 1513.93,876.12 1481.99,892.09 1513.93,908.06 1481.99,924.02 1513.93,939.99 1481.99,955.96 1497.96,963.94" stroke="#700000" stroke-width="3.6" fill="none" stroke-linecap="round" stroke-linejoin="round"/><line x1="939.08" y1="836.2" x2="939.08" y2="995.88" stroke="#700000" stroke-width="2.6" stroke-linecap="butt"/><line x1="899.16" y1="876.12" x2="979" y2="955.96" stroke="#700000" stroke-width="5" stroke-linecap="round"/><line x1="899.16" y1="955.96" x2="979" y2="876.12" stroke="#700000" stroke-width="5" stroke-linecap="round"/><line x1="1338.28" y1="836.2" x2="1338.28" y2="995.88" stroke="#700000" stroke-width="2.6" stroke-linecap="butt"/><line x1="1298.36" y1="876.12" x2="1378.2" y2="955.96" stroke="#700000" stroke-width="5" stroke-linecap="round"/><line x1="1298.36" y1="955.96" x2="1378.2" y2="876.12" stroke="#700000" stroke-width="5" stroke-linecap="round"/><line x1="1138.68" y1="437" x2="1138.68" y2="476.92" stroke="#700000" stroke-width="2.6" stroke-linecap="butt"/><line x1="1138.68" y1="516.84" x2="1138.68" y2="556.76" stroke="#700000" stroke-width="2.6" stroke-linecap="butt"/><line x1="1138.68" y1="636.6" x2="1138.68" y2="676.52" stroke="#700000" stroke-width="2.6" stroke-linecap="butt"/><line x1="1108.74" y1="437" x2="1168.62" y2="437" stroke="#700000" stroke-width="4.6" stroke-linecap="round"/><circle cx="1138.68" cy="596.68" r="39.92" fill="#fffbd6" stroke="#700000" stroke-width="3.2"/><polyline points="1138.68,572.73 1146.66,580.71 1130.7,588.7 1162.63,596.68 1146.66,604.66 1154.65,612.65 1138.68,620.63" stroke="#700000" stroke-width="4.2" fill="none" stroke-linecap="round" stroke-linejoin="round"/><line x1="1114.28" y1="583.38" x2="1114.28" y2="609.88" stroke="#700000" stroke-width="1.7" stroke-linecap="round"/><polyline points="1105.28,601.38 1114.28,609.88 1123.28,601.38" stroke="#700000" stroke-width="1.7" fill="none" stroke-linecap="round" stroke-linejoin="round"/><circle cx="939.08" cy="756.36" r="9.3" fill="#117000"/><circle cx="1138.68" cy="756.36" r="9.3" fill="#117000"/><circle cx="1338.28" cy="756.36" r="9.3" fill="#117000"/><circle cx="939.08" cy="836.2" r="9.3" fill="#117000"/><circle cx="1338.28" cy="836.2" r="9.3" fill="#117000"/><circle cx="939.08" cy="995.88" r="9.3" fill="#117000"/><circle cx="1338.28" cy="995.88" r="9.3" fill="#117000"/><line x1="659.64" y1="716.44" x2="699.56" y2="756.36" stroke="#8a8a8a" stroke-width="1.1" stroke-linecap="butt"/><line x1="1577.8" y1="716.44" x2="1577.8" y2="756.36" stroke="#8a8a8a" stroke-width="1.1" stroke-linecap="butt"/><line x1="694.56" y1="751.36" x2="704.56" y2="761.36" stroke="#5fb54a" stroke-width="1.2" stroke-linecap="butt"/><line x1="694.56" y1="761.36" x2="704.56" y2="751.36" stroke="#5fb54a" stroke-width="1.2" stroke-linecap="butt"/><line x1="1572.8" y1="751.36" x2="1582.8" y2="761.36" stroke="#5fb54a" stroke-width="1.2" stroke-linecap="butt"/><line x1="1572.8" y1="761.36" x2="1582.8" y2="751.36" stroke="#5fb54a" stroke-width="1.2" stroke-linecap="butt"/><rect x="659.64" y="277.32" width="319.36" height="319.36" fill="#fffbd6" stroke="#700000" stroke-width="3.2"/><path d="M659.64 317.24H979M659.64 357.16H979M659.64 397.08H979M659.64 437H979M659.64 476.92H979M659.64 516.84H979M659.64 556.76H979M819.32 277.32V596.68M899.16 277.32V596.68M739.48 317.24V596.68" stroke="#700000" stroke-width="3.2" fill="none"/></g></svg><div style="position:absolute;left:200.5px;top:1323.5px;width:166px;height:2px;background:#b4b4b4"></div><div style="position:absolute;left:201px;top:1325.5px;width:40.2px;height:35px;background:linear-gradient(#dcdcdc,#ececec 60%,#f3f3f3);box-shadow:inset 0 0 0 1px #c2c2c2"></div><div style="position:absolute;left:242.5px;top:1325.5px;width:40.2px;height:35px;background:linear-gradient(#dcdcdc,#ececec 60%,#f3f3f3);box-shadow:inset 0 0 0 1px #c2c2c2"></div><div style="position:absolute;left:284px;top:1325.5px;width:40.2px;height:35px;background:linear-gradient(#dcdcdc,#ececec 60%,#f3f3f3);box-shadow:inset 0 0 0 1px #c2c2c2"></div><div style="position:absolute;left:325.3px;top:1325.5px;width:40.2px;height:35px;background:linear-gradient(#dcdcdc,#ececec 60%,#f3f3f3);box-shadow:inset 0 0 0 1px #c2c2c2"></div><svg style="position:absolute;left:0px;top:0px;overflow:visible" width="2197" height="1507" viewBox="0 0 2197 1507" class="ov"><path d="M217.6 1333.5h5.8v6.3h6.3v5.8h-6.3v6.3h-5.8v-6.3h-6.3v-5.8h6.3z" fill="#5ec51e" stroke="#2f9a0a" stroke-width="1"/><rect x="252.5" y="1340" width="20.5" height="6" rx="1.5" fill="#f0202c" stroke="#c0101a" stroke-width="0.8"/><polyline points="291.8,1350.5 304.2,1337.8 316.6,1350.5" fill="none" stroke="#a3a3a3" stroke-width="4.5" stroke-linecap="round" stroke-linejoin="round"/><polyline points="333.5,1338 345.8,1350.8 358.2,1338" fill="none" stroke="#a3a3a3" stroke-width="4.5" stroke-linecap="round" stroke-linejoin="round"/></svg><div style="position:absolute;left:367px;top:214px;width:1.5px;height:1147px;background:#b3b3b3"></div><div style="position:absolute;left:368px;top:214px;width:1509px;height:1127px;background:#fff"></div><svg class="ov" style="position:absolute;left:0;top:0" width="2197" height="1507" viewBox="0 0 2197 1507"><defs><clipPath id="cc"><rect x="368" y="214" width="1509" height="1127"/></clipPath></defs><g clip-path="url(#cc)" font-family="'Liberation Sans', sans-serif" class="cv"><path d="M380.2 214V1341M420.12 214V1341M460.04 214V1341M499.96 214V1341M539.88 214V1341M579.8 214V1341M619.72 214V1341M659.64 214V1341M699.56 214V1341M739.48 214V1341M779.4 214V1341M819.32 214V1341M859.24 214V1341M899.16 214V1341M939.08 214V1341M979 214V1341M1018.92 214V1341M1058.84 214V1341M1098.76 214V1341M1138.68 214V1341M1178.6 214V1341M1218.52 214V1341M1258.44 214V1341M1298.36 214V1341M1338.28 214V1341M1378.2 214V1341M1418.12 214V1341M1458.04 214V1341M1497.96 214V1341M1537.88 214V1341M1577.8 214V1341M1617.72 214V1341M1657.64 214V1341M1697.56 214V1341M1737.48 214V1341M1777.4 214V1341M1817.32 214V1341M1857.24 214V1341M368 237.4H1877M368 277.32H1877M368 317.24H1877M368 357.16H1877M368 397.08H1877M368 437H1877M368 476.92H1877M368 516.84H1877M368 556.76H1877M368 596.68H1877M368 636.6H1877M368 676.52H1877M368 716.44H1877M368 756.36H1877M368 796.28H1877M368 836.2H1877M368 876.12H1877M368 916.04H1877M368 955.96H1877M368 995.88H1877M368 1035.8H1877M368 1075.72H1877M368 1115.64H1877M368 1155.56H1877M368 1195.48H1877M368 1235.4H1877M368 1275.32H1877M368 1315.24H1877" stroke="rgba(0,0,0,0.135)" stroke-width="1.1" fill="none"/><line x1="699.56" y1="756.36" x2="739.48" y2="756.36" stroke="#117000" stroke-width="2.6" stroke-linecap="round"/><line x1="899.16" y1="756.36" x2="939.08" y2="756.36" stroke="#117000" stroke-width="2.6" stroke-linecap="round"/><line x1="1098.76" y1="756.36" x2="1178.6" y2="756.36" stroke="#117000" stroke-width="2.6" stroke-linecap="round"/><line x1="1338.28" y1="756.36" x2="1378.2" y2="756.36" stroke="#117000" stroke-width="2.6" stroke-linecap="round"/><line x1="1537.88" y1="756.36" x2="1577.8" y2="756.36" stroke="#117000" stroke-width="2.6" stroke-linecap="round"/><line x1="1138.68" y1="476.92" x2="1138.68" y2="516.84" stroke="#117000" stroke-width="2.6" stroke-linecap="round"/><line x1="1138.68" y1="676.52" x2="1138.68" y2="756.36" stroke="#117000" stroke-width="2.6" stroke-linecap="round"/><line x1="939.08" y1="756.36" x2="939.08" y2="836.2" stroke="#117000" stroke-width="2.6" stroke-linecap="round"/><line x1="1338.28" y1="756.36" x2="1338.28" y2="836.2" stroke="#117000" stroke-width="2.6" stroke-linecap="round"/><line x1="779.4" y1="836.2" x2="939.08" y2="836.2" stroke="#117000" stroke-width="2.6" stroke-linecap="round"/><line x1="779.4" y1="995.88" x2="939.08" y2="995.88" stroke="#117000" stroke-width="2.6" stroke-linecap="round"/><line x1="1338.28" y1="836.2" x2="1497.96" y2="836.2" stroke="#117000" stroke-width="2.6" stroke-linecap="round"/><line x1="1338.28" y1="995.88" x2="1497.96" y2="995.88" stroke="#117000" stroke-width="2.6" stroke-linecap="round"/><line x1="939.08" y1="995.88" x2="939.08" y2="1035.8" stroke="#117000" stroke-width="2.6" stroke-linecap="round"/><line x1="1338.28" y1="995.88" x2="1338.28" y2="1035.8" stroke="#117000" stroke-width="2.6" stroke-linecap="round"/><line x1="939.08" y1="1195.48" x2="939.08" y2="1235.4" stroke="#117000" stroke-width="2.6" stroke-linecap="round"/><line x1="1338.28" y1="1195.48" x2="1338.28" y2="1235.4" stroke="#117000" stroke-width="2.6" stroke-linecap="round"/><line x1="739.48" y1="756.36" x2="759.44" y2="756.36" stroke="#700000" stroke-width="2.6" stroke-linecap="butt"/><line x1="879.2" y1="756.36" x2="899.16" y2="756.36" stroke="#700000" stroke-width="2.6" stroke-linecap="butt"/><path d="M759.44 756.36 A14.97 14.97 0 0 1 789.38 756.36 A14.97 14.97 0 0 1 819.32 756.36 A14.97 14.97 0 0 1 849.26 756.36 A14.97 14.97 0 0 1 879.2 756.36" stroke="#700000" stroke-width="4.4" fill="none" stroke-linecap="round" stroke-linejoin="round"/><line x1="939.08" y1="756.36" x2="959.04" y2="756.36" stroke="#700000" stroke-width="2.6" stroke-linecap="butt"/><line x1="1078.8" y1="756.36" x2="1098.76" y2="756.36" stroke="#700000" stroke-width="2.6" stroke-linecap="butt"/><path d="M959.04 756.36 A14.97 14.97 0 0 1 988.98 756.36 A14.97 14.97 0 0 1 1018.92 756.36 A14.97 14.97 0 0 1 1048.86 756.36 A14.97 14.97 0 0 1 1078.8 756.36" stroke="#700000" stroke-width="4.4" fill="none" stroke-linecap="round" stroke-linejoin="round"/><line x1="1178.6" y1="756.36" x2="1198.56" y2="756.36" stroke="#700000" stroke-width="2.6" stroke-linecap="butt"/><line x1="1318.32" y1="756.36" x2="1338.28" y2="756.36" stroke="#700000" stroke-width="2.6" stroke-linecap="butt"/><path d="M1198.56 756.36 A14.97 14.97 0 0 1 1228.5 756.36 A14.97 14.97 0 0 1 1258.44 756.36 A14.97 14.97 0 0 1 1288.38 756.36 A14.97 14.97 0 0 1 1318.32 756.36" stroke="#700000" stroke-width="4.4" fill="none" stroke-linecap="round" stroke-linejoin="round"/><line x1="1378.2" y1="756.36" x2="1398.16" y2="756.36" stroke="#700000" stroke-width="2.6" stroke-linecap="butt"/><line x1="1517.92" y1="756.36" x2="1537.88" y2="756.36" stroke="#700000" stroke-width="2.6" stroke-linecap="butt"/><path d="M1398.16 756.36 A14.97 14.97 0 0 1 1428.1 756.36 A14.97 14.97 0 0 1 1458.04 756.36 A14.97 14.97 0 0 1 1487.98 756.36 A14.97 14.97 0 0 1 1517.92 756.36" stroke="#700000" stroke-width="4.4" fill="none" stroke-linecap="round" stroke-linejoin="round"/><line x1="939.08" y1="1035.8" x2="939.08" y2="1055.76" stroke="#700000" stroke-width="2.6" stroke-linecap="butt"/><line x1="939.08" y1="1175.52" x2="939.08" y2="1195.48" stroke="#700000" stroke-width="2.6" stroke-linecap="butt"/><path d="M939.08 1055.76 A14.97 14.97 0 0 0 939.08 1085.7 A14.97 14.97 0 0 0 939.08 1115.64 A14.97 14.97 0 0 0 939.08 1145.58 A14.97 14.97 0 0 0 939.08 1175.52" stroke="#700000" stroke-width="4.4" fill="none" stroke-linecap="round" stroke-linejoin="round"/><line x1="939.08" y1="1235.4" x2="939.08" y2="1275.32" stroke="#700000" stroke-width="2.6" stroke-linecap="butt"/><line x1="909.14" y1="1275.32" x2="969.02" y2="1275.32" stroke="#700000" stroke-width="4.6" stroke-linecap="round"/><line x1="1338.28" y1="1035.8" x2="1338.28" y2="1055.76" stroke="#700000" stroke-width="2.6" stroke-linecap="butt"/><line x1="1338.28" y1="1175.52" x2="1338.28" y2="1195.48" stroke="#700000" stroke-width="2.6" stroke-linecap="butt"/><path d="M1338.28 1055.76 A14.97 14.97 0 0 0 1338.28 1085.7 A14.97 14.97 0 0 0 1338.28 1115.64 A14.97 14.97 0 0 0 1338.28 1145.58 A14.97 14.97 0 0 0 1338.28 1175.52" stroke="#700000" stroke-width="4.4" fill="none" stroke-linecap="round" stroke-linejoin="round"/><line x1="1338.28" y1="1235.4" x2="1338.28" y2="1275.32" stroke="#700000" stroke-width="2.6" stroke-linecap="butt"/><line x1="1308.34" y1="1275.32" x2="1368.22" y2="1275.32" stroke="#700000" stroke-width="4.6" stroke-linecap="round"/><line x1="779.4" y1="836.2" x2="779.4" y2="868.14" stroke="#700000" stroke-width="2.6" stroke-linecap="butt"/><line x1="779.4" y1="963.94" x2="779.4" y2="995.88" stroke="#700000" stroke-width="2.6" stroke-linecap="butt"/><polyline points="779.4,868.14 795.37,876.12 763.43,892.09 795.37,908.06 763.43,924.02 795.37,939.99 763.43,955.96 779.4,963.94" stroke="#700000" stroke-width="3.6" fill="none" stroke-linecap="round" stroke-linejoin="round"/><line x1="1497.96" y1="836.2" x2="1497.96" y2="868.14" stroke="#700000" stroke-width="2.6" stroke-linecap="butt"/><line x1="1497.96" y1="963.94" x2="1497.96" y2="995.88" stroke="#700000" stroke-width="2.6" stroke-linecap="butt"/><polyline points="1497.96,868.14 1513.93,876.12 1481.99,892.09 1513.93,908.06 1481.99,924.02 1513.93,939.99 1481.99,955.96 1497.96,963.94" stroke="#700000" stroke-width="3.6" fill="none" stroke-linecap="round" stroke-linejoin="round"/><line x1="939.08" y1="836.2" x2="939.08" y2="995.88" stroke="#700000" stroke-width="2.6" stroke-linecap="butt"/><line x1="899.16" y1="876.12" x2="979" y2="955.96" stroke="#700000" stroke-width="5" stroke-linecap="round"/><line x1="899.16" y1="955.96" x2="979" y2="876.12" stroke="#700000" stroke-width="5" stroke-linecap="round"/><line x1="1338.28" y1="836.2" x2="1338.28" y2="995.88" stroke="#700000" stroke-width="2.6" stroke-linecap="butt"/><line x1="1298.36" y1="876.12" x2="1378.2" y2="955.96" stroke="#700000" stroke-width="5" stroke-linecap="round"/><line x1="1298.36" y1="955.96" x2="1378.2" y2="876.12" stroke="#700000" stroke-width="5" stroke-linecap="round"/><line x1="1138.68" y1="437" x2="1138.68" y2="476.92" stroke="#700000" stroke-width="2.6" stroke-linecap="butt"/><line x1="1138.68" y1="516.84" x2="1138.68" y2="556.76" stroke="#700000" stroke-width="2.6" stroke-linecap="butt"/><line x1="1138.68" y1="636.6" x2="1138.68" y2="676.52" stroke="#700000" stroke-width="2.6" stroke-linecap="butt"/><line x1="1108.74" y1="437" x2="1168.62" y2="437" stroke="#700000" stroke-width="4.6" stroke-linecap="round"/><circle cx="1138.68" cy="596.68" r="39.92" fill="#fffbd6" stroke="#700000" stroke-width="3.2"/><polyline points="1138.68,572.73 1146.66,580.71 1130.7,588.7 1162.63,596.68 1146.66,604.66 1154.65,612.65 1138.68,620.63" stroke="#700000" stroke-width="4.2" fill="none" stroke-linecap="round" stroke-linejoin="round"/><line x1="1114.28" y1="583.38" x2="1114.28" y2="609.88" stroke="#700000" stroke-width="1.7" stroke-linecap="round"/><polyline points="1105.28,601.38 1114.28,609.88 1123.28,601.38" stroke="#700000" stroke-width="1.7" fill="none" stroke-linecap="round" stroke-linejoin="round"/><circle cx="939.08" cy="756.36" r="9.3" fill="#117000"/><circle cx="1138.68" cy="756.36" r="9.3" fill="#117000"/><circle cx="1338.28" cy="756.36" r="9.3" fill="#117000"/><circle cx="939.08" cy="836.2" r="9.3" fill="#117000"/><circle cx="1338.28" cy="836.2" r="9.3" fill="#117000"/><circle cx="939.08" cy="995.88" r="9.3" fill="#117000"/><circle cx="1338.28" cy="995.88" r="9.3" fill="#117000"/><line x1="659.64" y1="716.44" x2="699.56" y2="756.36" stroke="#8a8a8a" stroke-width="1.1" stroke-linecap="butt"/><line x1="1577.8" y1="716.44" x2="1577.8" y2="756.36" stroke="#8a8a8a" stroke-width="1.1" stroke-linecap="butt"/><line x1="694.56" y1="751.36" x2="704.56" y2="761.36" stroke="#5fb54a" stroke-width="1.2" stroke-linecap="butt"/><line x1="694.56" y1="761.36" x2="704.56" y2="751.36" stroke="#5fb54a" stroke-width="1.2" stroke-linecap="butt"/><line x1="1572.8" y1="751.36" x2="1582.8" y2="761.36" stroke="#5fb54a" stroke-width="1.2" stroke-linecap="butt"/><line x1="1572.8" y1="761.36" x2="1582.8" y2="751.36" stroke="#5fb54a" stroke-width="1.2" stroke-linecap="butt"/><rect x="659.64" y="277.32" width="319.36" height="319.36" fill="#fffbd6" stroke="#700000" stroke-width="3.2"/><path d="M659.64 317.24H979M659.64 357.16H979M659.64 397.08H979M659.64 437H979M659.64 476.92H979M659.64 516.84H979M659.64 556.76H979M819.32 277.32V596.68M899.16 277.32V596.68M739.48 317.24V596.68" stroke="#700000" stroke-width="3.2" fill="none"/><path d="M819.32 309.24H835.32M827.32 301.24V317.24M899.16 309.24H915.16M907.16 301.24V317.24M659.64 349.16H675.64M667.64 341.16V357.16M739.48 349.16H755.48M747.48 341.16V357.16M819.32 349.16H835.32M827.32 341.16V357.16M899.16 349.16H915.16M907.16 341.16V357.16M659.64 389.08H675.64M667.64 381.08V397.08M739.48 389.08H755.48M747.48 381.08V397.08M819.32 389.08H835.32M827.32 381.08V397.08M899.16 389.08H915.16M907.16 381.08V397.08M659.64 429H675.64M667.64 421V437M739.48 429H755.48M747.48 421V437M819.32 429H835.32M827.32 421V437M899.16 429H915.16M907.16 421V437M659.64 468.92H675.64M667.64 460.92V476.92M739.48 468.92H755.48M747.48 460.92V476.92M819.32 468.92H835.32M827.32 460.92V476.92M899.16 468.92H915.16M907.16 460.92V476.92M659.64 508.84H675.64M667.64 500.84V516.84M739.48 508.84H755.48M747.48 500.84V516.84M819.32 508.84H835.32M827.32 500.84V516.84M899.16 508.84H915.16M907.16 500.84V516.84M659.64 548.76H675.64M667.64 540.76V556.76M739.48 548.76H755.48M747.48 540.76V556.76M819.32 548.76H835.32M827.32 540.76V556.76M899.16 548.76H915.16M907.16 540.76V556.76M659.64 588.68H675.64M667.64 580.68V596.68M739.48 588.68H755.48M747.48 580.68V596.68M819.32 588.68H835.32M827.32 580.68V596.68M899.16 588.68H915.16M907.16 580.68V596.68M683.7 309.4H699.7M691.7 301.4V317.4M1003.6 516.5H1019.6M1011.6 508.5V524.5M1003.6 635.7H1019.6M1011.6 627.7V643.7M1025.2 516.5H1041.2M1033.2 508.5V524.5M1025.2 635.7H1041.2M1033.2 627.7V643.7M1046.8 516.5H1062.8M1054.8 508.5V524.5M1046.8 635.7H1062.8M1054.8 627.7V643.7M1070.4 516.5H1086.4M1078.4 508.5V524.5M1070.4 635.7H1086.4M1078.4 627.7V643.7M1093 516.5H1109M1101 508.5V524.5M1093 635.7H1109M1101 627.7V643.7M1210.3 595.6H1226.3M1218.3 587.6V603.6M762.94 740.5H778.94M770.94 732.5V748.5M762.94 763H778.94M770.94 755V771M962.54 740.5H978.54M970.54 732.5V748.5M962.54 763H978.54M970.54 755V771M1202.06 740.5H1218.06M1210.06 732.5V748.5M1202.06 763H1218.06M1210.06 755V771M1401.66 740.5H1417.66M1409.66 732.5V748.5M1401.66 763H1417.66M1409.66 755V771M851.1 916.3H867.1M859.1 908.3V924.3M962 956.1H978M970 948.1V964.1M1211 916.3H1227M1219 908.3V924.3M1362 956.1H1378M1370 948.1V964.1M755.6 964.3H771.6M763.6 956.3V972.3M787.5 964.3H803.5M795.5 956.3V972.3M1474.4 964.3H1490.4M1482.4 956.3V972.3M1506.3 964.3H1522.3M1514.3 956.3V972.3M835.5 1124.6H851.5M843.5 1116.6V1132.6M937.5 1163.6H953.5M945.5 1155.6V1171.6M1235.2 1124.6H1251.2M1243.2 1116.6V1132.6M1337.2 1163.6H1353.2M1345.2 1155.6V1171.6" stroke="#c9c9c9" stroke-width="1" fill="none"/><path d="M807.32 756.36H831.32M819.32 744.36V768.36M1006.92 756.36H1030.92M1018.92 744.36V768.36M1246.44 756.36H1270.44M1258.44 744.36V768.36M1446.04 756.36H1470.04M1458.04 744.36V768.36M927.08 916.04H951.08M939.08 904.04V928.04M1326.28 916.04H1350.28M1338.28 904.04V928.04M927.08 1115.64H951.08M939.08 1103.64V1127.64M1326.28 1115.64H1350.28M1338.28 1103.64V1127.64M1126.68 596.68H1150.68M1138.68 584.68V608.68" stroke="#a8a8a8" stroke-width="1" fill="none" opacity="0.45"/><text x="776.56" y="269" font-size="27.93" fill="#262626" stroke="#262626" stroke-width="0.3" textLength="67.28" lengthAdjust="spacingAndGlyphs" font-weight="normal">JJ250</text><text x="692.18" y="308" font-size="27.23" fill="#700000" stroke="#700000" stroke-width="0.3" textLength="99.83" lengthAdjust="spacingAndGlyphs" font-weight="normal">MODEL</text><text x="827.27" y="305.14" font-size="17.74" fill="#700000" stroke="#700000" stroke-width="0.3" textLength="10.06" lengthAdjust="spacingAndGlyphs" font-weight="normal">T</text><text x="827.27" y="345.06" font-size="17.74" fill="#700000" stroke="#700000" stroke-width="0.3" textLength="20.76" lengthAdjust="spacingAndGlyphs" font-weight="normal">TC</text><text x="827.27" y="384.98" font-size="17.74" fill="#700000" stroke="#700000" stroke-width="0.3" textLength="42.06" lengthAdjust="spacingAndGlyphs" font-weight="normal">DELV</text><text x="827.27" y="424.9" font-size="17.74" fill="#700000" stroke="#700000" stroke-width="0.3" textLength="13.06" lengthAdjust="spacingAndGlyphs" font-weight="normal">D</text><text x="827.27" y="464.82" font-size="17.74" fill="#700000" stroke="#700000" stroke-width="0.3" textLength="47.06" lengthAdjust="spacingAndGlyphs" font-weight="normal">ICFCT</text><text x="827.27" y="504.74" font-size="17.74" fill="#700000" stroke="#700000" stroke-width="0.3" textLength="29.56" lengthAdjust="spacingAndGlyphs" font-weight="normal">PHI</text><text x="827.27" y="544.66" font-size="17.74" fill="#700000" stroke="#700000" stroke-width="0.3" textLength="32.86" lengthAdjust="spacingAndGlyphs" font-weight="normal">CPR</text><text x="827.27" y="584.58" font-size="17.74" fill="#700000" stroke="#700000" stroke-width="0.3" textLength="42.86" lengthAdjust="spacingAndGlyphs" font-weight="normal">ICON</text><text x="667.97" y="344.86" font-size="17.74" fill="#700000" stroke="#700000" stroke-width="0.3" textLength="50.06" lengthAdjust="spacingAndGlyphs" font-weight="normal">RTYPE</text><text x="747.47" y="344.86" font-size="17.74" fill="#3a3a3a" stroke="#3a3a3a" stroke-width="0.3" textLength="10.36" lengthAdjust="spacingAndGlyphs" font-weight="normal">0</text><text x="667.97" y="384.78" font-size="17.74" fill="#700000" stroke="#700000" stroke-width="0.3" textLength="22.46" lengthAdjust="spacingAndGlyphs" font-weight="normal">VG</text><text x="667.97" y="424.7" font-size="17.74" fill="#700000" stroke="#700000" stroke-width="0.3" textLength="42.66" lengthAdjust="spacingAndGlyphs" font-weight="normal">ICRIT</text><text x="747.47" y="424.7" font-size="17.74" fill="#3a3a3a" stroke="#3a3a3a" stroke-width="0.3" textLength="52.26" lengthAdjust="spacingAndGlyphs" font-weight="normal">250µA</text><text x="667.97" y="464.62" font-size="17.74" fill="#700000" stroke="#700000" stroke-width="0.3" textLength="23.76" lengthAdjust="spacingAndGlyphs" font-weight="normal">RN</text><text x="747.47" y="464.62" font-size="17.74" fill="#3a3a3a" stroke="#3a3a3a" stroke-width="0.3" textLength="33.86" lengthAdjust="spacingAndGlyphs" font-weight="normal">90Ω</text><text x="667.97" y="504.54" font-size="17.74" fill="#700000" stroke="#700000" stroke-width="0.3" textLength="21.26" lengthAdjust="spacingAndGlyphs" font-weight="normal">R0</text><text x="667.97" y="544.46" font-size="17.74" fill="#700000" stroke="#700000" stroke-width="0.3" textLength="32.56" lengthAdjust="spacingAndGlyphs" font-weight="normal">CAP</text><text x="747.47" y="544.46" font-size="17.74" fill="#3a3a3a" stroke="#3a3a3a" stroke-width="0.3" textLength="54.76" lengthAdjust="spacingAndGlyphs" font-weight="normal">1,25pF</text><text x="667.97" y="584.38" font-size="17.74" fill="#700000" stroke="#700000" stroke-width="0.3" textLength="31.26" lengthAdjust="spacingAndGlyphs" font-weight="normal">CCT</text><text x="1106.18" y="428" font-size="27.23" fill="#3a3a3a" stroke="#3a3a3a" stroke-width="0.3" textLength="63.63" lengthAdjust="spacingAndGlyphs" font-weight="normal">GND</text><text x="1183.44" y="627.5" font-size="28.63" fill="#141414" stroke="#141414" stroke-width="0.3" textLength="34.62" lengthAdjust="spacingAndGlyphs" font-weight="normal">Ijtl</text><text transform="translate(1157.5 544.5) rotate(-90)" x="-0.5" y="0" font-size="16.76" fill="#3a3a3a" stroke="#3a3a3a" stroke-width="0.3" textLength="7.51" lengthAdjust="spacingAndGlyphs">1</text><text transform="translate(1157.5 657.5) rotate(-90)" x="-0.5" y="0" font-size="16.76" fill="#3a3a3a" stroke="#3a3a3a" stroke-width="0.3" textLength="10.51" lengthAdjust="spacingAndGlyphs">2</text><text transform="translate(1050.7 555.5) rotate(-90)" x="-0.56" y="0" font-size="18.72" fill="#3a3a3a" stroke="#3a3a3a" stroke-width="0.3" textLength="40.12" lengthAdjust="spacingAndGlyphs">100n</text><text transform="translate(1074.4 536) rotate(-90)" x="-0.56" y="0" font-size="18.72" fill="#3a3a3a" stroke="#3a3a3a" stroke-width="0.3" textLength="20.62" lengthAdjust="spacingAndGlyphs">5p</text><text transform="translate(1097 527) rotate(-90)" x="-0.56" y="0" font-size="18.72" fill="#3a3a3a" stroke="#3a3a3a" stroke-width="0.3" textLength="11.62" lengthAdjust="spacingAndGlyphs">0</text><text transform="translate(1050.7 687) rotate(-90)" x="-0.56" y="0" font-size="18.72" fill="#3a3a3a" stroke="#3a3a3a" stroke-width="0.3" textLength="51.32" lengthAdjust="spacingAndGlyphs">350µA</text><text transform="translate(1074.4 687) rotate(-90)" x="-0.56" y="0" font-size="18.72" fill="#3a3a3a" stroke="#3a3a3a" stroke-width="0.3" textLength="51.32" lengthAdjust="spacingAndGlyphs">350µA</text><text transform="translate(1097 667) rotate(-90)" x="-0.56" y="0" font-size="18.72" fill="#3a3a3a" stroke="#3a3a3a" stroke-width="0.3" textLength="31.32" lengthAdjust="spacingAndGlyphs">0µA</text><text x="659.25" y="708" font-size="25.14" fill="#117000" stroke="#117000" stroke-width="0.3" textLength="13.51" lengthAdjust="spacingAndGlyphs" font-weight="normal">1</text><text x="1578.05" y="708" font-size="25.14" fill="#117000" stroke="#117000" stroke-width="0.3" textLength="13.21" lengthAdjust="spacingAndGlyphs" font-weight="normal">2</text><text x="772.35" y="731.9" font-size="29.75" fill="#141414" stroke="#141414" stroke-width="0.3" textLength="25.28" lengthAdjust="spacingAndGlyphs" font-weight="normal">L1</text><text x="770.96" y="793.9" font-size="29.19" fill="#3a3a3a" stroke="#3a3a3a" stroke-width="0.3" textLength="95.35" lengthAdjust="spacingAndGlyphs" font-weight="normal">2.08pH</text><text x="971.95" y="731.9" font-size="29.75" fill="#141414" stroke="#141414" stroke-width="0.3" textLength="31.28" lengthAdjust="spacingAndGlyphs" font-weight="normal">L2</text><text x="970.56" y="793.9" font-size="29.19" fill="#3a3a3a" stroke="#3a3a3a" stroke-width="0.3" textLength="95.35" lengthAdjust="spacingAndGlyphs" font-weight="normal">2.06pH</text><text x="1211.47" y="731.9" font-size="29.75" fill="#141414" stroke="#141414" stroke-width="0.3" textLength="31.18" lengthAdjust="spacingAndGlyphs" font-weight="normal">L3</text><text x="1210.08" y="793.9" font-size="29.19" fill="#3a3a3a" stroke="#3a3a3a" stroke-width="0.3" textLength="95.35" lengthAdjust="spacingAndGlyphs" font-weight="normal">2.06pH</text><text x="1411.07" y="731.9" font-size="29.75" fill="#141414" stroke="#141414" stroke-width="0.3" textLength="30.98" lengthAdjust="spacingAndGlyphs" font-weight="normal">L4</text><text x="1409.68" y="793.9" font-size="29.19" fill="#3a3a3a" stroke="#3a3a3a" stroke-width="0.3" textLength="95.35" lengthAdjust="spacingAndGlyphs" font-weight="normal">2.08pH</text><text x="855.44" y="907.8" font-size="28.77" fill="#141414" stroke="#141414" stroke-width="0.3" textLength="30.33" lengthAdjust="spacingAndGlyphs" font-weight="normal">JJ1</text><text x="966.72" y="986.6" font-size="29.33" fill="#3a3a3a" stroke="#3a3a3a" stroke-width="0.3" textLength="68.26" lengthAdjust="spacingAndGlyphs" font-weight="normal">JJ250</text><text x="1214.74" y="908.5" font-size="28.77" fill="#141414" stroke="#141414" stroke-width="0.3" textLength="35.53" lengthAdjust="spacingAndGlyphs" font-weight="normal">JJ2</text><text x="1366.02" y="986.6" font-size="29.33" fill="#3a3a3a" stroke="#3a3a3a" stroke-width="0.3" textLength="68.26" lengthAdjust="spacingAndGlyphs" font-weight="normal">JJ250</text><text transform="translate(754.9 962.2) rotate(-90)" x="-0.87" y="0" font-size="28.91" fill="#141414" stroke="#141414" stroke-width="0.3" textLength="47.53" lengthAdjust="spacingAndGlyphs">RB1</text><text transform="translate(826.1 961.7) rotate(-90)" x="-0.87" y="0" font-size="28.91" fill="#3a3a3a" stroke="#3a3a3a" stroke-width="0.3" textLength="95.33" lengthAdjust="spacingAndGlyphs">1,024Ω</text><text transform="translate(1474.3 962.2) rotate(-90)" x="-0.87" y="0" font-size="28.91" fill="#141414" stroke="#141414" stroke-width="0.3" textLength="47.53" lengthAdjust="spacingAndGlyphs">RB2</text><text transform="translate(1545.7 961.7) rotate(-90)" x="-0.87" y="0" font-size="28.91" fill="#3a3a3a" stroke="#3a3a3a" stroke-width="0.3" textLength="95.33" lengthAdjust="spacingAndGlyphs">1,024Ω</text><text x="844.23" y="1115.8" font-size="28.91" fill="#141414" stroke="#141414" stroke-width="0.3" textLength="48.73" lengthAdjust="spacingAndGlyphs" font-weight="normal">L1p</text><text x="945.46" y="1194.7" font-size="27.93" fill="#3a3a3a" stroke="#3a3a3a" stroke-width="0.3" textLength="96.48" lengthAdjust="spacingAndGlyphs" font-weight="normal">0.01pH</text><text x="907.23" y="1306.2" font-size="28.91" fill="#3a3a3a" stroke="#3a3a3a" stroke-width="0.3" textLength="63.83" lengthAdjust="spacingAndGlyphs" font-weight="normal">GND</text><text x="1243.43" y="1115.8" font-size="28.91" fill="#141414" stroke="#141414" stroke-width="0.3" textLength="48.73" lengthAdjust="spacingAndGlyphs" font-weight="normal">L2p</text><text x="1344.66" y="1194.7" font-size="27.93" fill="#3a3a3a" stroke="#3a3a3a" stroke-width="0.3" textLength="96.48" lengthAdjust="spacingAndGlyphs" font-weight="normal">0.01pH</text><text x="1306.83" y="1306.2" font-size="28.91" fill="#3a3a3a" stroke="#3a3a3a" stroke-width="0.3" textLength="63.83" lengthAdjust="spacingAndGlyphs" font-weight="normal">GND</text><line x1="1298.4" y1="916" x2="1298.4" y2="1155.5" stroke="#7a7a7a" stroke-width="1" stroke-linecap="butt"/><line x1="1178" y1="1036.2" x2="1418.4" y2="1036.2" stroke="#7a7a7a" stroke-width="1" stroke-linecap="butt"/><rect x="1278.4" y="1016.2" width="40" height="40" fill="none" stroke="#9a9a9a" stroke-width="1"/></g></svg><div style="position:absolute;left:1876.5px;top:214px;width:20.5px;height:1147px;background:#f8f8f8;box-shadow:inset 1px 0 0 #e6e6e6"></div><div style="position:absolute;left:368px;top:1341px;width:1509px;height:20px;background:#f8f8f8;box-shadow:inset 0 1px 0 #e3e3e3"></div><div style="position:absolute;left:1876.5px;top:1341px;width:20.5px;height:20px;background:#fff"></div><div style="position:absolute;left:1881.5px;top:737.3px;width:11.5px;height:53.7px;background:#6a6a6a;border-radius:6px"></div><div style="position:absolute;left:1061px;top:1345.8px;width:99px;height:11px;background:#6a6a6a;border-radius:6px"></div><div style="position:absolute;left:1897px;top:214px;width:1.6px;height:1147px;background:#9c9c9c"></div><div style="position:absolute;left:1899px;top:214px;width:220px;height:28px;background:#e6e6e6"></div><div style="position:absolute;left:1899px;top:242px;width:220px;height:3.6px;background:#b9b9b9"></div><div style="position:absolute;left:1899px;top:245.6px;width:220px;height:1104.4px;background:#fff"></div><div style="position:absolute;left:1899px;top:1350px;width:220px;height:11px;background:#e4e4e4;box-shadow:inset 0 1px 0 #b0b0b0"></div><div class="tx" style="position:absolute;left:1899px;top:219.5px;width:266px;text-align:center;font:15.9px 'Liberation Sans',sans-serif;color:#1a1a1a">ERC [2]</div><svg style="position:absolute;left:0px;top:0px;overflow:visible" width="2197" height="1507" viewBox="0 0 2197 1507" class="ov"><circle cx="1910.6" cy="227.6" r="9.6" fill="#505050"/><path d="M1906.4 223.4l8.4 8.4m0 -8.4l-8.4 8.4" stroke="#fff" stroke-width="2.8" stroke-linecap="round"/><circle cx="1935.6" cy="227.6" r="9.6" fill="#505050"/><rect x="1933" y="223.9" width="7.6" height="5.6" fill="none" stroke="#fff" stroke-width="1.3"/><rect x="1930.6" y="226.8" width="7.6" height="5.4" fill="#505050" stroke="#fff" stroke-width="1.3"/><path d="M1911.5 247 L1923 266.5 Q1924 268.5 1922 268.5 H1901 Q1899 268.5 1900 266.5 Z" fill="#e87a1a" stroke="#c85a08" stroke-width="1"/><path d="M1911.5 254 L1918.5 265.5 H1904.5 Z" fill="#f6b070"/><rect x="1910.7" y="255" width="1.6" height="6" fill="#222"/><rect x="1910.7" y="262.5" width="1.6" height="1.6" fill="#222"/><line x1="2050.5" y1="255" x2="2050.5" y2="267.5" stroke="#222" stroke-width="1"/><path d="M1911.5 270.5 L1923 290 Q1924 292 1922 292 H1901 Q1899 292 1900 290 Z" fill="#e87a1a" stroke="#c85a08" stroke-width="1"/><path d="M1911.5 277.5 L1918.5 289 H1904.5 Z" fill="#f6b070"/><rect x="1910.7" y="278.5" width="1.6" height="6" fill="#222"/><rect x="1910.7" y="286" width="1.6" height="1.6" fill="#222"/><line x1="2050.5" y1="278.5" x2="2050.5" y2="291" stroke="#222" stroke-width="1"/></svg><div class="tx" style="position:absolute;left:1927px;top:248px;font:18.8px 'Liberation Sans',sans-serif;color:#0a0a0a;white-space:pre">Less than two</div><div class="tx" style="position:absolute;left:1927px;top:271.5px;font:18.8px 'Liberation Sans',sans-serif;color:#0a0a0a;white-space:pre">Less than two</div><div style="position:absolute;left:2055.3px;top:246px;width:62.4px;height:46.8px;background:#a3a3a3"></div><div style="position:absolute;left:2057.1px;top:247.8px;width:28.6px;height:20.9px;background:linear-gradient(#dcdcdc,#f3f3f3)"></div><div style="position:absolute;left:2088.3px;top:247.8px;width:28.6px;height:20.9px;background:linear-gradient(#dcdcdc,#f3f3f3)"></div><div style="position:absolute;left:2057.1px;top:270.5px;width:28.6px;height:20.9px;background:linear-gradient(#dcdcdc,#f3f3f3)"></div><div style="position:absolute;left:2088.3px;top:270.5px;width:28.6px;height:20.9px;background:linear-gradient(#dcdcdc,#f3f3f3)"></div><svg style="position:absolute;left:0px;top:0px;overflow:visible" width="2197" height="1507" viewBox="0 0 2197 1507" class="ov"><path d="M2066.8 259.2 Q2067.8 258.2 2069 259.4 Q2071.5 256.2 2074.6 254.6 Q2075 254.9 2074.4 255.4 Q2071.4 258.4 2069.2 262.2 Q2068.4 262.6 2067.8 262 Q2067.4 260.5 2066.8 259.2 Z" fill="#111"/><text x="2099" y="263.2" font-size="14" fill="#222" font-family="'Liberation Sans',sans-serif">?</text><path d="M2066.8 282.8 Q2067.8 281.8 2069 283 Q2071.5 279.8 2074.6 278.2 Q2075 278.5 2074.4 279 Q2071.4 282 2069.2 285.8 Q2068.4 286.2 2067.8 285.6 Q2067.4 284.1 2066.8 282.8 Z" fill="#111"/><text x="2099" y="286.8" font-size="14" fill="#222" font-family="'Liberation Sans',sans-serif">?</text></svg><div style="position:absolute;left:78px;top:1361px;width:2041px;height:1.6px;background:#8e8e8e"></div><div style="position:absolute;left:78px;top:1362.6px;width:2041px;height:42px;background:#e5e5e5"></div><div class="tx" style="position:absolute;top:1372px;font:19px 'Liberation Sans',sans-serif;color:#111;white-space:pre;left:1537.5px">X:</div><div class="tx" style="position:absolute;top:1372px;font:19px 'Liberation Sans',sans-serif;color:#111;white-space:pre;left:1584px">-3.710mm</div><div class="tx" style="position:absolute;top:1372px;font:19px 'Liberation Sans',sans-serif;color:#111;white-space:pre;left:1679.5px">Y:</div><div class="tx" style="position:absolute;top:1372px;font:19px 'Liberation Sans',sans-serif;color:#111;white-space:pre;left:1726px">29.855mm</div>
</div></div>
</body></html>
